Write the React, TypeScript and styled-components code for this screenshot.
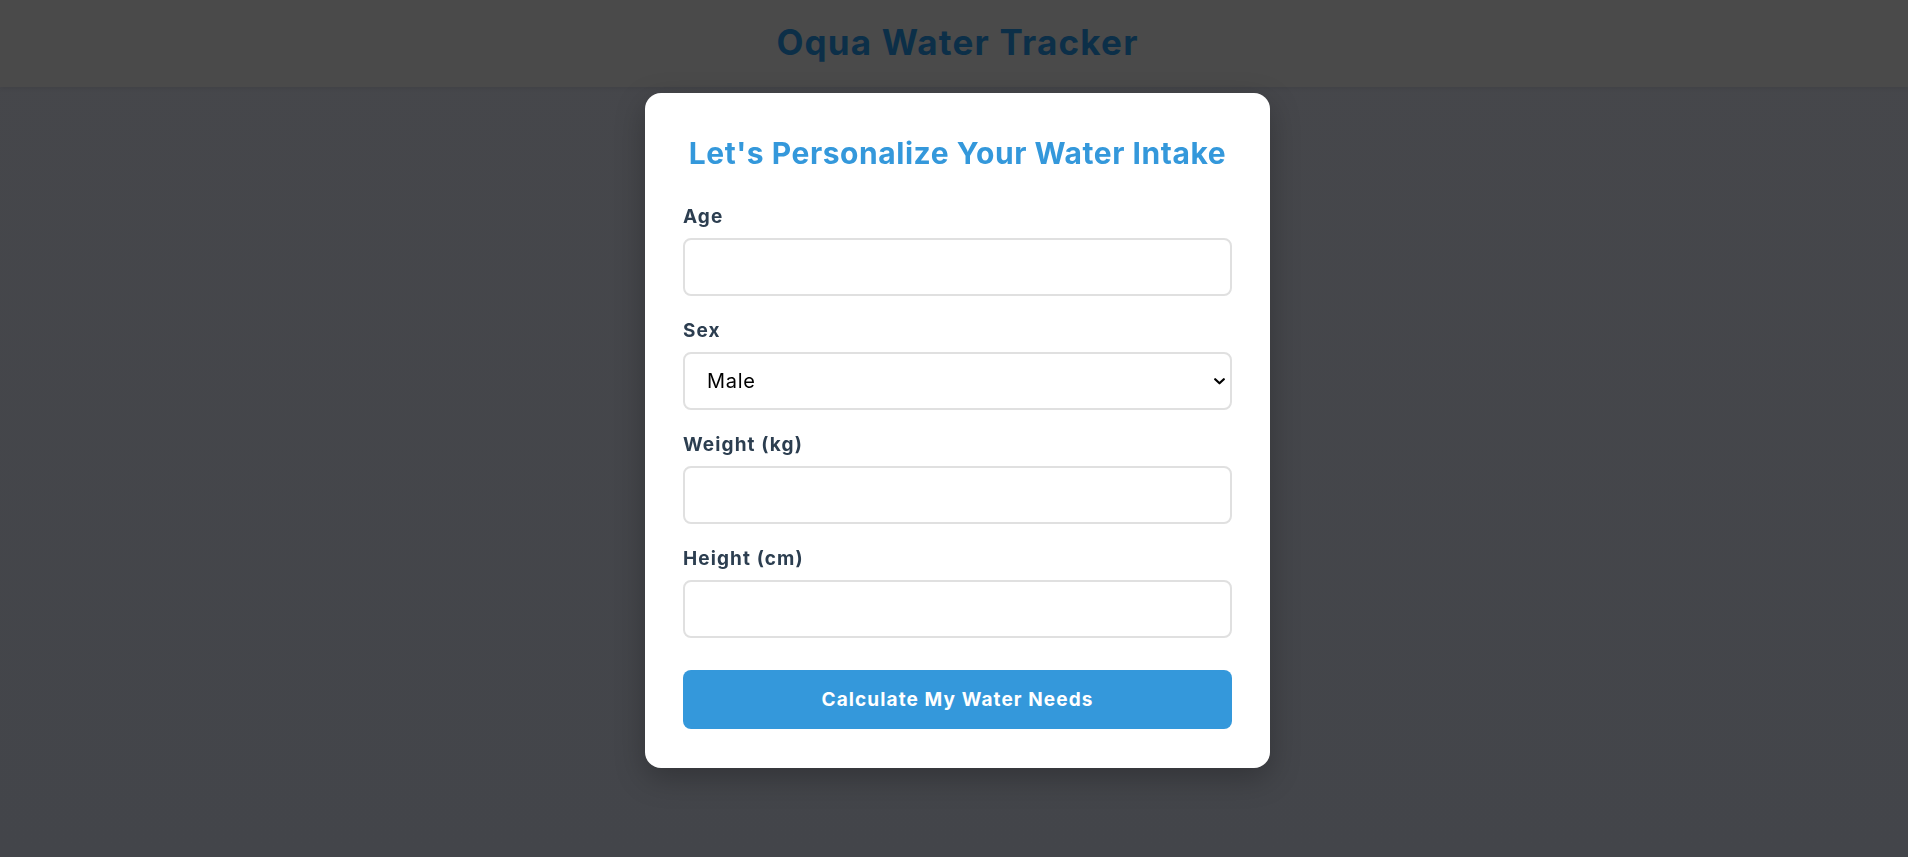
import React from "react";
import styled, { createGlobalStyle } from "styled-components";

const GlobalStyle = createGlobalStyle`
  * { box-sizing: border-box; }
  html, body { margin: 0; padding: 0; }
  body {
    font-family: "Inter", "Liberation Sans", sans-serif;
    background: linear-gradient(180deg, #46474b 0%, #43454a 100%);
    min-height: 857px;
    overflow: hidden;
  }
`;

const Page = styled.div`
  min-height: 857px;
`;

const Header = styled.header`
  height: 87px;
  background: #4a4a4a;
  box-shadow: 0 2px 4px rgba(0, 0, 0, 0.06);
  display: flex;
  align-items: center;
  justify-content: center;
  padding: 0 0 4px 7px;
`;

const Brand = styled.h1`
  margin: 0;
  font-size: 35px;
  line-height: 40px;
  font-weight: 700;
  letter-spacing: 1.2px;
  color: #0c2f48;
`;

const Overlay = styled.div`
  position: fixed;
  inset: 0;
  display: flex;
  align-items: center;
  justify-content: center;
  padding: 3px 0 0 7px;
`;

const Card = styled.form`
  width: 625px;
  display: flex;
  flex-direction: column;
  background: #ffffff;
  border-radius: 16px;
  padding: 40px 38px 39px;
  box-shadow: 0 10px 30px rgba(0, 0, 0, 0.25);
`;

const Title = styled.h2`
  margin: 0 0 30px;
  font-size: 30px;
  line-height: 40px;
  font-weight: 700;
  letter-spacing: 0.55px;
  color: #3498db;
  text-align: center;
`;

const Field = styled.div`
  display: flex;
  flex-direction: column;
  margin-bottom: 21px;
`;

const Label = styled.label`
  font-size: 19px;
  line-height: 27px;
  font-weight: 700;
  letter-spacing: 1.1px;
  color: #2c3e50;
  margin-bottom: 8px;
`;

const TextInput = styled.input`
  height: 58px;
  width: 100%;
  border: 2px solid #e0e0e0;
  border-radius: 8px;
  padding: 0 22px;
  font-family: inherit;
  font-size: 20px;
  color: #000;
  background: #fff;
  outline: none;
`;

const SelectWrap = styled.div`
  position: relative;
`;

const Select = styled.select`
  appearance: none;
  -webkit-appearance: none;
  height: 58px;
  width: 100%;
  border: 2px solid #e0e0e0;
  border-radius: 8px;
  padding: 0 40px 0 22px;
  font-family: inherit;
  font-size: 20px;
  letter-spacing: 0.7px;
  color: #000;
  background: #fff;
  outline: none;
`;

const Chevron = styled.svg`
  position: absolute;
  right: 7px;
  top: 50%;
  width: 11px;
  height: 7px;
  margin-top: -3px;
  pointer-events: none;
`;

const SubmitButton = styled.button`
  display: block;
  width: 100%;
  height: 59px;
  margin-top: 11px;
  border: none;
  border-radius: 8px;
  background: #3498db;
  color: #ffffff;
  font-family: inherit;
  font-size: 19px;
  font-weight: 700;
  letter-spacing: 1.1px;
  cursor: pointer;
`;

export default function App() {
  return (
    <Page>
      <GlobalStyle />
      <Header>
        <Brand>Oqua Water Tracker</Brand>
      </Header>
      <Overlay>
        <Card onSubmit={(e) => e.preventDefault()}>
          <Title>Let's Personalize Your Water Intake</Title>
          <Field>
            <Label htmlFor="age">Age</Label>
            <TextInput id="age" type="number" />
          </Field>
          <Field>
            <Label htmlFor="sex">Sex</Label>
            <SelectWrap>
              <Select id="sex" defaultValue="male">
                <option value="male">Male</option>
                <option value="female">Female</option>
              </Select>
              <Chevron viewBox="0 0 11 7">
                <polyline
                  points="1.2,1.2 5.5,5.3 9.8,1.2"
                  fill="none"
                  stroke="#000"
                  strokeWidth="2.2"
                  strokeLinecap="round"
                  strokeLinejoin="round"
                />
              </Chevron>
            </SelectWrap>
          </Field>
          <Field>
            <Label htmlFor="weight">Weight (kg)</Label>
            <TextInput id="weight" type="number" />
          </Field>
          <Field>
            <Label htmlFor="height">Height (cm)</Label>
            <TextInput id="height" type="number" />
          </Field>
          <SubmitButton type="submit">Calculate My Water Needs</SubmitButton>
        </Card>
      </Overlay>
    </Page>
  );
}
